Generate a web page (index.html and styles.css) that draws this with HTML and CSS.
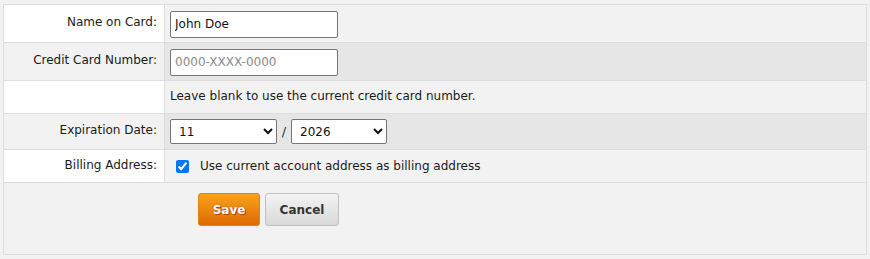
FILE: index.html
```html
<!DOCTYPE html>
<html>
<head>
<meta charset="utf-8">
<link rel="stylesheet" href="styles.css">
</head>
<body>
<table class="form">
  <tr class="row odd r1">
    <td class="label">Name on Card:</td>
    <td class="value"><input class="text" type="text" value="John Doe"></td>
  </tr>
  <tr class="row even r2">
    <td class="label">Credit Card Number:</td>
    <td class="value"><input class="text" type="text" placeholder="0000-XXXX-0000"></td>
  </tr>
  <tr class="row odd r3">
    <td class="label"></td>
    <td class="value note">Leave blank to use the current credit card number.</td>
  </tr>
  <tr class="row even r4">
    <td class="label">Expiration Date:</td>
    <td class="value">
      <div class="date">
        <select class="sel month"><option>11</option></select>
        <span class="slash">/</span>
        <select class="sel year"><option>2026</option></select>
      </div>
    </td>
  </tr>
  <tr class="row odd r5">
    <td class="label">Billing Address:</td>
    <td class="value">
      <label class="check"><input type="checkbox" checked><span>Use current account address as billing address</span></label>
    </td>
  </tr>
  <tr class="actions">
    <td colspan="2" class="actions-cell">
      <div class="buttons">
        <button class="btn save">Save</button>
        <button class="btn cancel">Cancel</button>
      </div>
    </td>
  </tr>
</table>
</body>
</html>
```

FILE: styles.css
```css
html, body {
  margin: 0;
  padding: 0;
  background: #f2f2f2;
}
body {
  padding: 4px 3px 0 3px;
  font-family: "DejaVu Sans", Verdana, sans-serif;
  font-size: 12px;
  color: #1a1a1a;
}
.form {
  width: 864px;
  border-collapse: collapse;
  border: 1px solid #dddddd;
  background: #f2f2f2;
}
.row td {
  border-bottom: 1px solid #dddddd;
  padding: 0;
}
.label {
  width: 153px;
  text-align: right;
  padding-right: 7px !important;
  padding-bottom: 3px !important;
  border-right: 1px solid #dddddd;
  vertical-align: middle;
}
.value {
  padding-left: 5px !important;
  vertical-align: middle;
}
.note { padding-bottom: 2px !important; }
.odd .label { background: #ffffff; }
.odd .value { background: #f2f2f2; }
.even .label { background: #f2f2f2; }
.even .value { background: #e6e6e6; }
.r1 td { height: 34px; }
.r2 td { height: 34px; }
.r3 td { height: 29px; }
.r4 td { height: 32px; }
.r5 td { height: 29px; }
.r1 .value, .r2 .value, .r4 .value, .r5 .value { height: 37px; }
.r5 .value { height: 32px; }
.r4 .value { height: 35px; }
.r3 .value { height: 30px; }

.text {
  box-sizing: border-box;
  width: 168px;
  height: 27px;
  margin: 1px 0 0 0;
  padding: 0 4px;
  border: 1px solid #767676;
  border-radius: 2px;
  font-family: "DejaVu Sans", Verdana, sans-serif;
  font-size: 12px;
  color: #111;
  background: #fff;
  display: block;
}
.text::placeholder { color: #8a8a8a; }

.note { color: #1a1a1a; }

.date {
  display: flex;
  align-items: center;
}
.sel {
  box-sizing: border-box;
  height: 25px;
  border: 1px solid #767676;
  border-radius: 2px;
  background: #fff;
  font-family: "DejaVu Sans", Verdana, sans-serif;
  font-size: 12px;
  color: #111;
  padding-left: 4px;
}
.month { width: 107px; }
.year { width: 96px; }
.slash {
  width: 14px;
  text-align: center;
  color: #333;
  font-size: 13px;
}

.check {
  display: flex;
  align-items: center;
}
.check input {
  margin: 0 0 0 6px;
  width: 13px;
  height: 13px;
  accent-color: #0075ff;
}
.check span { margin-left: 11px; }

.actions-cell {
  height: 71px;
  padding: 0 0 0 194px;
  vertical-align: top;
  background: #f2f2f2;
}
.buttons {
  display: flex;
  gap: 5px;
  padding-top: 10px;
}
.btn {
  box-sizing: border-box;
  height: 33px;
  border-radius: 3px;
  font-family: "DejaVu Sans", Verdana, sans-serif;
  font-weight: bold;
  font-size: 12px;
  padding: 0;
}
.save {
  width: 62px;
  color: #fff;
  background: linear-gradient(#f7a21c, #df6a02);
  border: 1px solid #d9870f;
  text-shadow: 0 0 1px #a33, 1px 1px 0 #b4450a;
}
.cancel {
  width: 74px;
  color: #333;
  background: linear-gradient(#f3f3f3, #d9d9d9);
  border: 1px solid #c0c0c0;
}
```
